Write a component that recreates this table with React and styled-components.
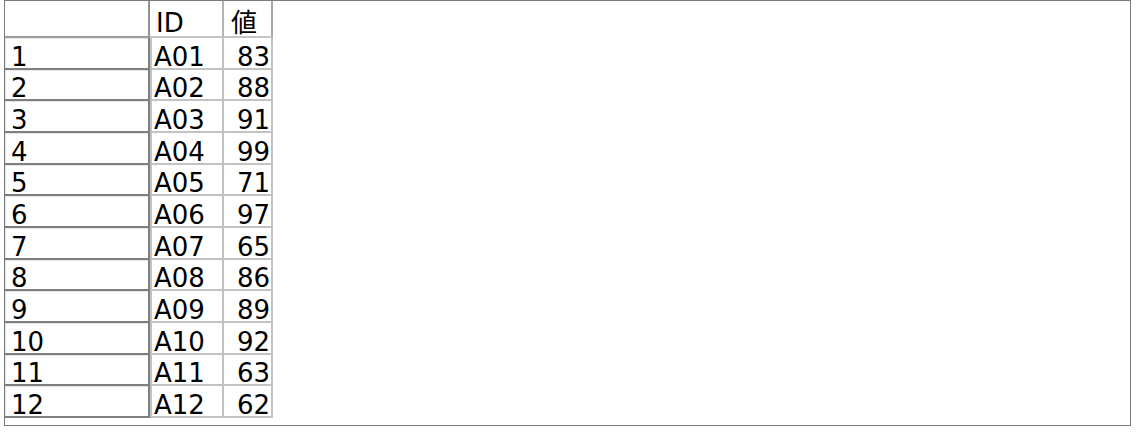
import React from "react";
import styled, { createGlobalStyle } from "styled-components";

const rows = [
  ["A01", 83],
  ["A02", 88],
  ["A03", 91],
  ["A04", 99],
  ["A05", 71],
  ["A06", 97],
  ["A07", 65],
  ["A08", 86],
  ["A09", 89],
  ["A10", 92],
  ["A11", 63],
  ["A12", 62],
];

export default function App() {
  return (
    <>
      <GlobalStyle />
      <Frame>
        <Sheet>
          <thead>
            <tr>
              <Corner />
              <HeadCell $w={74} $pad={6}>ID</HeadCell>
              <HeadCell $w={49} $pad={7} $last>値</HeadCell>
            </tr>
          </thead>
          <tbody>
            {rows.map(([id, value], i) => (
              <tr key={id}>
                <RowHead>{i + 1}</RowHead>
                <Cell>{id}</Cell>
                <Cell $num>{value}</Cell>
              </tr>
            ))}
          </tbody>
        </Sheet>
      </Frame>
    </>
  );
}

const GlobalStyle = createGlobalStyle`
  body {
    margin: 0;
    background: #fff;
    font-family: "DejaVu Sans", "Noto Sans CJK JP", sans-serif;
  }
`;

const Frame = styled.div`
  box-sizing: border-box;
  width: 1127px;
  height: 426px;
  margin-left: 4px;
  border: 1px solid #7a7a7a;
`;

const Sheet = styled.table`
  table-layout: fixed;
  border-collapse: separate;
  border-spacing: 0;
  font-size: 26px;
  color: #000;

  th,
  td {
    box-sizing: border-box;
    font-weight: normal;
    white-space: nowrap;
  }
`;

const Corner = styled.th`
  width: 145px;
  padding: 0;
  border-right: 2px solid #949494;
  border-bottom: 2px solid #9c9c9c;
`;

const HeadCell = styled.th`
  width: ${(p) => p.$w}px;
  text-align: left;
  line-height: 26px;
  padding: 9px 0 0 ${(p) => p.$pad}px;
  border-right: 2px solid ${(p) => (p.$last ? "#a8a8a8" : "#b4b4b4")};
  border-bottom: 2px solid #c4c4c4;
`;

const RowHead = styled.th`
  text-align: left;
  line-height: 21px;
  padding: 8.67px 0 0 6px;
  border-right: 2px solid #7f7f7f;
  border-bottom: 2px solid #7f7f7f;
  box-shadow: inset 1px 1px 0 #e6e6e6;
`;

const Cell = styled.td`
  text-align: ${(p) => (p.$num ? "right" : "left")};
  line-height: 21px;
  padding: 8.67px ${(p) => (p.$num ? "1px" : "0")} 0
    ${(p) => (p.$num ? "0" : "2px")};
  border-left: ${(p) => (p.$num ? "0" : "2px solid #c2c2c2")};
  border-right: 2px solid #c2c2c2;
  border-bottom: 2px solid #c2c2c2;
`;
